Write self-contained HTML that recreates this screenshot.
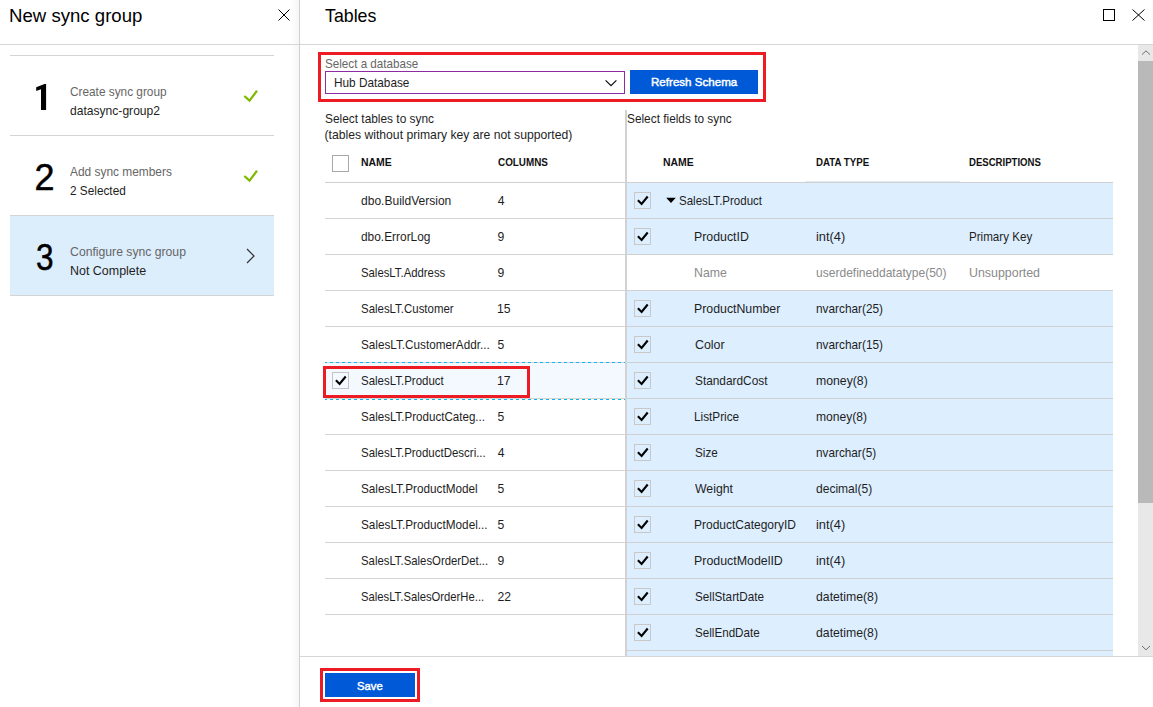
<!DOCTYPE html>
<html><head><meta charset="utf-8"><style>
html,body{margin:0;padding:0;background:#fff;width:1153px;height:707px;overflow:hidden;position:relative}
body>div{position:absolute}
.t{white-space:nowrap;font-family:"Liberation Sans", sans-serif;transform-origin:0 0}
</style></head><body>
<div style="left:290px;top:0px;width:9px;height:707px;background:linear-gradient(to right, rgba(0,0,0,0), rgba(0,0,0,0.035));"></div>
<div style="left:299px;top:0px;width:1px;height:707px;background:#d0d0d0;"></div>
<div style="left:0px;top:44px;width:299px;height:1px;background:#d6d6d6;"></div>
<div class="t" style="left:9.47px;top:4.68px;font-size:18.800px;line-height:21.62px;color:#000;font-weight:normal;transform:scaleX(0.9905);">New sync group</div>
<svg style="position:absolute;left:278px;top:9px" width="12" height="12" viewBox="0 0 12 12"><path d="M0.5 0.5L11.5 11.5M11.5 0.5L0.5 11.5" stroke="#000" stroke-width="1"/></svg>
<div style="left:10px;top:55px;width:264px;height:1px;background:#d4d4d4;"></div>
<div style="left:10px;top:216px;width:264px;height:79px;background:#dcedfc;"></div>
<div style="left:10px;top:135px;width:264px;height:1px;background:#d4d4d4;"></div>
<svg style="position:absolute;left:30px;top:80px" width="24" height="34" viewBox="0 0 24 34"><path d="M6.2 7.3L14.5 4L16.1 4L16.1 30L11 30L11 9.3L6.2 11Z" fill="#000"/></svg>
<div class="t" style="left:70.10px;top:84.76px;font-size:12.200px;line-height:14.03px;color:#666;font-weight:normal;transform:scaleX(0.9697);">Create sync group</div>
<div class="t" style="left:70.19px;top:103.76px;font-size:12.200px;line-height:14.03px;color:#1e1e1e;font-weight:normal;transform:scaleX(0.9914);">datasync-group2</div>
<div style="left:10px;top:215px;width:264px;height:1px;background:#d4d4d4;"></div>
<div class="t" style="left:34.59px;top:156.83px;font-size:36.000px;line-height:41.4px;color:#000;font-weight:normal;-webkit-text-stroke:0.5px #000">2</div>
<div class="t" style="left:69.98px;top:164.76px;font-size:12.200px;line-height:14.03px;color:#666;font-weight:normal;transform:scaleX(0.9763);">Add sync members</div>
<div class="t" style="left:70.11px;top:183.76px;font-size:12.200px;line-height:14.03px;color:#1e1e1e;font-weight:normal;transform:scaleX(0.9680);">2 Selected</div>
<div style="left:10px;top:295px;width:264px;height:1px;background:#d4d4d4;"></div>
<div class="t" style="left:36.00px;top:236.83px;font-size:36.000px;line-height:41.4px;color:#000;font-weight:normal;transform:scaleX(0.8758);-webkit-text-stroke:0.5px #000">3</div>
<div class="t" style="left:70.08px;top:244.76px;font-size:12.200px;line-height:14.03px;color:#666;font-weight:normal;">Configure sync group</div>
<div class="t" style="left:69.68px;top:263.76px;font-size:12.200px;line-height:14.03px;color:#1e1e1e;font-weight:normal;transform:scaleX(1.0219);">Not Complete</div>
<svg style="position:absolute;left:243px;top:89px" width="16" height="14" viewBox="0 0 16 14"><path d="M1.3 7L6.5 11.6L14 1.8" fill="none" stroke="#7fba00" stroke-width="2.3"/></svg>
<svg style="position:absolute;left:243px;top:169px" width="16" height="14" viewBox="0 0 16 14"><path d="M1.3 7L6.5 11.6L14 1.8" fill="none" stroke="#7fba00" stroke-width="2.3"/></svg>
<svg style="position:absolute;left:245px;top:248px" width="12" height="16" viewBox="0 0 12 16"><path d="M2 1L9 8L2 15" fill="none" stroke="#333" stroke-width="1.2"/></svg>
<div style="left:300px;top:44px;width:853px;height:1px;background:#d6d6d6;"></div>
<div class="t" style="left:324.60px;top:6.23px;font-size:18.200px;line-height:20.93px;color:#000;font-weight:normal;transform:scaleX(0.9778);">Tables</div>
<div style="left:1103px;top:9px;width:12px;height:12px;box-sizing:border-box;border:1px solid #000;"></div>
<svg style="position:absolute;left:1132px;top:9px" width="13" height="12" viewBox="0 0 13 12"><path d="M0.5 0.5L12.5 11.5M12.5 0.5L0.5 11.5" stroke="#000" stroke-width="1"/></svg>
<div style="left:318px;top:52px;width:448px;height:50px;box-sizing:border-box;border:3px solid #ed1c24;"></div>
<div class="t" style="left:324.67px;top:56.76px;font-size:12.200px;line-height:14.03px;color:#666666;font-weight:normal;transform:scaleX(0.9564);">Select a database</div>
<div style="left:325px;top:71px;width:300px;height:23px;box-sizing:border-box;border:1px solid #8b2ca3;background:#fff"></div>
<div class="t" style="left:333.63px;top:75.76px;font-size:12.200px;line-height:14.03px;color:#1e1e1e;font-weight:normal;transform:scaleX(0.9679);">Hub Database</div>
<svg style="position:absolute;left:604px;top:79px" width="14" height="8" viewBox="0 0 14 8"><path d="M1.6 1.4L7 6.6L12.4 1.4" fill="none" stroke="#111" stroke-width="1.3"/></svg>
<div style="left:630px;top:70px;width:128px;height:24px;background:#005ad8;"></div>
<div class="t" style="left:650.85px;top:76.13px;font-size:11.800px;line-height:13.57px;color:#fff;font-weight:normal;transform:scaleX(0.9817);-webkit-text-stroke:0.45px #fff">Refresh Schema</div>
<div class="t" style="left:324.76px;top:111.76px;font-size:12.200px;line-height:14.03px;color:#1e1e1e;font-weight:normal;transform:scaleX(0.9750);">Select tables to sync</div>
<div class="t" style="left:324.44px;top:127.76px;font-size:12.200px;line-height:14.03px;color:#1e1e1e;font-weight:normal;">(tables without primary key are not supported)</div>
<div class="t" style="left:626.86px;top:111.76px;font-size:12.200px;line-height:14.03px;color:#1e1e1e;font-weight:normal;transform:scaleX(0.9720);">Select fields to sync</div>
<div style="left:625px;top:110px;width:2px;height:546px;background:#d2d2d2;"></div>
<div style="left:332px;top:155px;width:17px;height:17px;box-sizing:border-box;border:1px solid #a8a8a8;"></div>
<div class="t" style="left:360.55px;top:156.51px;font-size:10.300px;line-height:11.845px;color:#111;font-weight:bold;transform:scaleX(1.0146);">NAME</div>
<div class="t" style="left:497.59px;top:156.51px;font-size:10.300px;line-height:11.845px;color:#111;font-weight:bold;transform:scaleX(0.9589);">COLUMNS</div>
<div style="left:325px;top:182px;width:300px;height:1px;background:#cfcfcf;"></div>
<div style="left:325px;top:218px;width:300px;height:1px;background:#d4d4d4;"></div>
<div class="t" style="left:360.69px;top:193.76px;font-size:12.200px;line-height:14.03px;color:#1e1e1e;font-weight:normal;transform:scaleX(0.9872);">dbo.BuildVersion</div>
<div class="t" style="left:497.72px;top:193.76px;font-size:12.200px;line-height:14.03px;color:#1e1e1e;font-weight:normal;">4</div>
<div style="left:325px;top:254px;width:300px;height:1px;background:#d4d4d4;"></div>
<div class="t" style="left:360.70px;top:229.76px;font-size:12.200px;line-height:14.03px;color:#1e1e1e;font-weight:normal;transform:scaleX(0.9765);">dbo.ErrorLog</div>
<div class="t" style="left:497.43px;top:229.76px;font-size:12.200px;line-height:14.03px;color:#1e1e1e;font-weight:normal;">9</div>
<div style="left:325px;top:290px;width:300px;height:1px;background:#d4d4d4;"></div>
<div class="t" style="left:360.68px;top:265.76px;font-size:12.200px;line-height:14.03px;color:#1e1e1e;font-weight:normal;transform:scaleX(0.9304);">SalesLT.Address</div>
<div class="t" style="left:497.43px;top:265.76px;font-size:12.200px;line-height:14.03px;color:#1e1e1e;font-weight:normal;">9</div>
<div style="left:325px;top:326px;width:300px;height:1px;background:#d4d4d4;"></div>
<div class="t" style="left:360.68px;top:301.76px;font-size:12.200px;line-height:14.03px;color:#1e1e1e;font-weight:normal;transform:scaleX(0.9383);">SalesLT.Customer</div>
<div class="t" style="left:497.07px;top:301.76px;font-size:12.200px;line-height:14.03px;color:#1e1e1e;font-weight:normal;">15</div>
<div style="left:325px;top:362px;width:300px;height:1px;background:#d4d4d4;"></div>
<div class="t" style="left:360.67px;top:337.76px;font-size:12.200px;line-height:14.03px;color:#1e1e1e;font-weight:normal;transform:scaleX(0.9612);">SalesLT.CustomerAddr...</div>
<div class="t" style="left:497.51px;top:337.76px;font-size:12.200px;line-height:14.03px;color:#1e1e1e;font-weight:normal;">5</div>
<div style="left:325px;top:363px;width:300px;height:35px;background:#f3f9fe;"></div>
<div style="left:325px;top:398px;width:300px;height:1px;background:#d4d4d4;"></div>
<div class="t" style="left:360.68px;top:373.76px;font-size:12.200px;line-height:14.03px;color:#1e1e1e;font-weight:normal;transform:scaleX(0.9425);">SalesLT.Product</div>
<div class="t" style="left:497.07px;top:373.76px;font-size:12.200px;line-height:14.03px;color:#1e1e1e;font-weight:normal;">17</div>
<div style="left:325px;top:434px;width:300px;height:1px;background:#d4d4d4;"></div>
<div class="t" style="left:360.67px;top:409.76px;font-size:12.200px;line-height:14.03px;color:#1e1e1e;font-weight:normal;transform:scaleX(0.9499);">SalesLT.ProductCateg...</div>
<div class="t" style="left:497.51px;top:409.76px;font-size:12.200px;line-height:14.03px;color:#1e1e1e;font-weight:normal;">5</div>
<div style="left:325px;top:470px;width:300px;height:1px;background:#d4d4d4;"></div>
<div class="t" style="left:360.68px;top:445.76px;font-size:12.200px;line-height:14.03px;color:#1e1e1e;font-weight:normal;transform:scaleX(0.9412);">SalesLT.ProductDescri...</div>
<div class="t" style="left:497.72px;top:445.76px;font-size:12.200px;line-height:14.03px;color:#1e1e1e;font-weight:normal;">4</div>
<div style="left:325px;top:506px;width:300px;height:1px;background:#d4d4d4;"></div>
<div class="t" style="left:360.67px;top:481.76px;font-size:12.200px;line-height:14.03px;color:#1e1e1e;font-weight:normal;transform:scaleX(0.9643);">SalesLT.ProductModel</div>
<div class="t" style="left:497.51px;top:481.76px;font-size:12.200px;line-height:14.03px;color:#1e1e1e;font-weight:normal;">5</div>
<div style="left:325px;top:542px;width:300px;height:1px;background:#d4d4d4;"></div>
<div class="t" style="left:360.67px;top:517.76px;font-size:12.200px;line-height:14.03px;color:#1e1e1e;font-weight:normal;transform:scaleX(0.9651);">SalesLT.ProductModel...</div>
<div class="t" style="left:497.51px;top:517.76px;font-size:12.200px;line-height:14.03px;color:#1e1e1e;font-weight:normal;">5</div>
<div style="left:325px;top:578px;width:300px;height:1px;background:#d4d4d4;"></div>
<div class="t" style="left:360.68px;top:553.76px;font-size:12.200px;line-height:14.03px;color:#1e1e1e;font-weight:normal;transform:scaleX(0.9310);">SalesLT.SalesOrderDet...</div>
<div class="t" style="left:497.43px;top:553.76px;font-size:12.200px;line-height:14.03px;color:#1e1e1e;font-weight:normal;">9</div>
<div style="left:325px;top:614px;width:300px;height:1px;background:#d4d4d4;"></div>
<div class="t" style="left:360.69px;top:589.76px;font-size:12.200px;line-height:14.03px;color:#1e1e1e;font-weight:normal;transform:scaleX(0.9245);">SalesLT.SalesOrderHe...</div>
<div class="t" style="left:497.39px;top:589.76px;font-size:12.200px;line-height:14.03px;color:#1e1e1e;font-weight:normal;">22</div>
<div style="left:325px;top:362px;width:300px;height:1px;background:repeating-linear-gradient(to right, #0bb5f0 0 2px, transparent 2px 5px, #0bb5f0 5px 6px);"></div>
<div style="left:325px;top:399px;width:300px;height:1px;background:repeating-linear-gradient(to right, #0bb5f0 0 2px, transparent 2px 5px, #0bb5f0 5px 6px);"></div>
<div style="left:332px;top:372px;width:17px;height:17px;box-sizing:border-box;border:1px solid #c4c4c4;"></div>
<svg style="position:absolute;left:332px;top:372px" width="17" height="17" viewBox="0 0 17 17"><path d="M3.9 8.3L7.6 12L13.7 4.5" fill="none" stroke="#000" stroke-width="2.1"/></svg>
<div style="left:323px;top:366px;width:207px;height:32px;box-sizing:border-box;border:3px solid #ed1c24;"></div>
<div class="t" style="left:662.60px;top:156.51px;font-size:10.300px;line-height:11.845px;color:#111;font-weight:bold;transform:scaleX(1.0146);">NAME</div>
<div class="t" style="left:815.95px;top:156.51px;font-size:10.300px;line-height:11.845px;color:#111;font-weight:bold;transform:scaleX(0.9406);">DATA TYPE</div>
<div class="t" style="left:969.06px;top:156.51px;font-size:10.300px;line-height:11.845px;color:#111;font-weight:bold;transform:scaleX(0.9306);">DESCRIPTIONS</div>
<div style="left:627px;top:182px;width:486px;height:1px;background:#cfcfcf;"></div>
<div style="left:805px;top:181px;width:155px;height:1px;background:#e4ecf4;"></div>
<div style="left:627px;top:183px;width:486px;height:35px;background:#ddeefe;"></div>
<div style="left:627px;top:218px;width:486px;height:1px;background:#d0d0d0;"></div>
<div style="left:634px;top:192px;width:17px;height:17px;box-sizing:border-box;border:1px solid #c8c8c8;"></div>
<svg style="position:absolute;left:634px;top:192px" width="17" height="17" viewBox="0 0 17 17"><path d="M3.9 8.3L7.6 12L13.7 4.5" fill="none" stroke="#000" stroke-width="2.1"/></svg>
<svg style="position:absolute;left:666px;top:197px" width="10" height="7" viewBox="0 0 10 7"><path d="M0.2 0.8H9.8L5 5.9Z" fill="#000"/></svg>
<div class="t" style="left:678.88px;top:193.76px;font-size:12.200px;line-height:14.03px;color:#1e1e1e;font-weight:normal;transform:scaleX(0.9452);">SalesLT.Product</div>
<div style="left:627px;top:219px;width:486px;height:35px;background:#ddeefe;"></div>
<div style="left:627px;top:254px;width:486px;height:1px;background:#d0d0d0;"></div>
<div style="left:634px;top:228px;width:17px;height:17px;box-sizing:border-box;border:1px solid #c8c8c8;"></div>
<svg style="position:absolute;left:634px;top:228px" width="17" height="17" viewBox="0 0 17 17"><path d="M3.9 8.3L7.6 12L13.7 4.5" fill="none" stroke="#000" stroke-width="2.1"/></svg>
<div class="t" style="left:694.19px;top:229.76px;font-size:12.200px;line-height:14.03px;color:#1e1e1e;font-weight:normal;transform:scaleX(1.0114);">ProductID</div>
<div class="t" style="left:815.84px;top:229.76px;font-size:12.200px;line-height:14.03px;color:#1e1e1e;font-weight:normal;transform:scaleX(1.0528);">int(4)</div>
<div class="t" style="left:969.05px;top:229.76px;font-size:12.200px;line-height:14.03px;color:#1e1e1e;font-weight:normal;transform:scaleX(0.9523);">Primary Key</div>
<div style="left:627px;top:290px;width:486px;height:1px;background:#d0d0d0;"></div>
<div class="t" style="left:694.19px;top:265.76px;font-size:12.200px;line-height:14.03px;color:#8a8a8a;font-weight:normal;transform:scaleX(1.0103);">Name</div>
<div class="t" style="left:815.92px;top:265.76px;font-size:12.200px;line-height:14.03px;color:#8a8a8a;font-weight:normal;transform:scaleX(0.9882);">userdefineddatatype(50)</div>
<div class="t" style="left:969.04px;top:265.76px;font-size:12.200px;line-height:14.03px;color:#8a8a8a;font-weight:normal;transform:scaleX(1.0174);">Unsupported</div>
<div style="left:627px;top:291px;width:486px;height:35px;background:#ddeefe;"></div>
<div style="left:627px;top:326px;width:486px;height:1px;background:#d0d0d0;"></div>
<div style="left:634px;top:300px;width:17px;height:17px;box-sizing:border-box;border:1px solid #c8c8c8;"></div>
<svg style="position:absolute;left:634px;top:300px" width="17" height="17" viewBox="0 0 17 17"><path d="M3.9 8.3L7.6 12L13.7 4.5" fill="none" stroke="#000" stroke-width="2.1"/></svg>
<div class="t" style="left:694.19px;top:301.76px;font-size:12.200px;line-height:14.03px;color:#1e1e1e;font-weight:normal;transform:scaleX(1.0111);">ProductNumber</div>
<div class="t" style="left:815.91px;top:301.76px;font-size:12.200px;line-height:14.03px;color:#1e1e1e;font-weight:normal;transform:scaleX(0.9703);">nvarchar(25)</div>
<div style="left:627px;top:327px;width:486px;height:35px;background:#ddeefe;"></div>
<div style="left:627px;top:362px;width:486px;height:1px;background:#d0d0d0;"></div>
<div style="left:634px;top:336px;width:17px;height:17px;box-sizing:border-box;border:1px solid #c8c8c8;"></div>
<svg style="position:absolute;left:634px;top:336px" width="17" height="17" viewBox="0 0 17 17"><path d="M3.9 8.3L7.6 12L13.7 4.5" fill="none" stroke="#000" stroke-width="2.1"/></svg>
<div class="t" style="left:694.57px;top:337.76px;font-size:12.200px;line-height:14.03px;color:#1e1e1e;font-weight:normal;transform:scaleX(1.0184);">Color</div>
<div class="t" style="left:815.91px;top:337.76px;font-size:12.200px;line-height:14.03px;color:#1e1e1e;font-weight:normal;transform:scaleX(0.9703);">nvarchar(15)</div>
<div style="left:627px;top:363px;width:486px;height:35px;background:#ddeefe;"></div>
<div style="left:627px;top:398px;width:486px;height:1px;background:#d0d0d0;"></div>
<div style="left:634px;top:372px;width:17px;height:17px;box-sizing:border-box;border:1px solid #c8c8c8;"></div>
<svg style="position:absolute;left:634px;top:372px" width="17" height="17" viewBox="0 0 17 17"><path d="M3.9 8.3L7.6 12L13.7 4.5" fill="none" stroke="#000" stroke-width="2.1"/></svg>
<div class="t" style="left:694.66px;top:373.76px;font-size:12.200px;line-height:14.03px;color:#1e1e1e;font-weight:normal;transform:scaleX(0.9722);">StandardCost</div>
<div class="t" style="left:815.89px;top:373.76px;font-size:12.200px;line-height:14.03px;color:#1e1e1e;font-weight:normal;transform:scaleX(1.0054);">money(8)</div>
<div style="left:627px;top:399px;width:486px;height:35px;background:#ddeefe;"></div>
<div style="left:627px;top:434px;width:486px;height:1px;background:#d0d0d0;"></div>
<div style="left:634px;top:408px;width:17px;height:17px;box-sizing:border-box;border:1px solid #c8c8c8;"></div>
<svg style="position:absolute;left:634px;top:408px" width="17" height="17" viewBox="0 0 17 17"><path d="M3.9 8.3L7.6 12L13.7 4.5" fill="none" stroke="#000" stroke-width="2.1"/></svg>
<div class="t" style="left:694.23px;top:409.76px;font-size:12.200px;line-height:14.03px;color:#1e1e1e;font-weight:normal;transform:scaleX(0.9656);">ListPrice</div>
<div class="t" style="left:815.90px;top:409.76px;font-size:12.200px;line-height:14.03px;color:#1e1e1e;font-weight:normal;transform:scaleX(0.9934);">money(8)</div>
<div style="left:627px;top:435px;width:486px;height:35px;background:#ddeefe;"></div>
<div style="left:627px;top:470px;width:486px;height:1px;background:#d0d0d0;"></div>
<div style="left:634px;top:444px;width:17px;height:17px;box-sizing:border-box;border:1px solid #c8c8c8;"></div>
<svg style="position:absolute;left:634px;top:444px" width="17" height="17" viewBox="0 0 17 17"><path d="M3.9 8.3L7.6 12L13.7 4.5" fill="none" stroke="#000" stroke-width="2.1"/></svg>
<div class="t" style="left:694.67px;top:445.76px;font-size:12.200px;line-height:14.03px;color:#1e1e1e;font-weight:normal;transform:scaleX(0.9612);">Size</div>
<div class="t" style="left:815.92px;top:445.76px;font-size:12.200px;line-height:14.03px;color:#1e1e1e;font-weight:normal;transform:scaleX(0.9653);">nvarchar(5)</div>
<div style="left:627px;top:471px;width:486px;height:35px;background:#ddeefe;"></div>
<div style="left:627px;top:506px;width:486px;height:1px;background:#d0d0d0;"></div>
<div style="left:634px;top:480px;width:17px;height:17px;box-sizing:border-box;border:1px solid #c8c8c8;"></div>
<svg style="position:absolute;left:634px;top:480px" width="17" height="17" viewBox="0 0 17 17"><path d="M3.9 8.3L7.6 12L13.7 4.5" fill="none" stroke="#000" stroke-width="2.1"/></svg>
<div class="t" style="left:695.15px;top:481.76px;font-size:12.200px;line-height:14.03px;color:#1e1e1e;font-weight:normal;transform:scaleX(1.0068);">Weight</div>
<div class="t" style="left:816.19px;top:481.76px;font-size:12.200px;line-height:14.03px;color:#1e1e1e;font-weight:normal;transform:scaleX(0.9881);">decimal(5)</div>
<div style="left:627px;top:507px;width:486px;height:35px;background:#ddeefe;"></div>
<div style="left:627px;top:542px;width:486px;height:1px;background:#d0d0d0;"></div>
<div style="left:634px;top:516px;width:17px;height:17px;box-sizing:border-box;border:1px solid #c8c8c8;"></div>
<svg style="position:absolute;left:634px;top:516px" width="17" height="17" viewBox="0 0 17 17"><path d="M3.9 8.3L7.6 12L13.7 4.5" fill="none" stroke="#000" stroke-width="2.1"/></svg>
<div class="t" style="left:694.22px;top:517.76px;font-size:12.200px;line-height:14.03px;color:#1e1e1e;font-weight:normal;transform:scaleX(0.9837);">ProductCategoryID</div>
<div class="t" style="left:815.84px;top:517.76px;font-size:12.200px;line-height:14.03px;color:#1e1e1e;font-weight:normal;transform:scaleX(1.0513);">int(4)</div>
<div style="left:627px;top:543px;width:486px;height:35px;background:#ddeefe;"></div>
<div style="left:627px;top:578px;width:486px;height:1px;background:#d0d0d0;"></div>
<div style="left:634px;top:552px;width:17px;height:17px;box-sizing:border-box;border:1px solid #c8c8c8;"></div>
<svg style="position:absolute;left:634px;top:552px" width="17" height="17" viewBox="0 0 17 17"><path d="M3.9 8.3L7.6 12L13.7 4.5" fill="none" stroke="#000" stroke-width="2.1"/></svg>
<div class="t" style="left:694.18px;top:553.76px;font-size:12.200px;line-height:14.03px;color:#1e1e1e;font-weight:normal;transform:scaleX(1.0162);">ProductModelID</div>
<div class="t" style="left:815.84px;top:553.76px;font-size:12.200px;line-height:14.03px;color:#1e1e1e;font-weight:normal;transform:scaleX(1.0513);">int(4)</div>
<div style="left:627px;top:579px;width:486px;height:35px;background:#ddeefe;"></div>
<div style="left:627px;top:614px;width:486px;height:1px;background:#d0d0d0;"></div>
<div style="left:634px;top:588px;width:17px;height:17px;box-sizing:border-box;border:1px solid #c8c8c8;"></div>
<svg style="position:absolute;left:634px;top:588px" width="17" height="17" viewBox="0 0 17 17"><path d="M3.9 8.3L7.6 12L13.7 4.5" fill="none" stroke="#000" stroke-width="2.1"/></svg>
<div class="t" style="left:694.67px;top:589.76px;font-size:12.200px;line-height:14.03px;color:#1e1e1e;font-weight:normal;transform:scaleX(0.9614);">SellStartDate</div>
<div class="t" style="left:816.18px;top:589.76px;font-size:12.200px;line-height:14.03px;color:#1e1e1e;font-weight:normal;transform:scaleX(1.0063);">datetime(8)</div>
<div style="left:627px;top:615px;width:486px;height:35px;background:#ddeefe;"></div>
<div style="left:627px;top:650px;width:486px;height:1px;background:#d0d0d0;"></div>
<div style="left:634px;top:624px;width:17px;height:17px;box-sizing:border-box;border:1px solid #c8c8c8;"></div>
<svg style="position:absolute;left:634px;top:624px" width="17" height="17" viewBox="0 0 17 17"><path d="M3.9 8.3L7.6 12L13.7 4.5" fill="none" stroke="#000" stroke-width="2.1"/></svg>
<div class="t" style="left:694.67px;top:625.76px;font-size:12.200px;line-height:14.03px;color:#1e1e1e;font-weight:normal;transform:scaleX(0.9549);">SellEndDate</div>
<div class="t" style="left:816.18px;top:625.76px;font-size:12.200px;line-height:14.03px;color:#1e1e1e;font-weight:normal;transform:scaleX(1.0063);">datetime(8)</div>
<div style="left:627px;top:651px;width:486px;height:5px;background:#ddeefe;"></div>
<div style="left:1138px;top:45px;width:15px;height:611px;background:#e8e8e8;"></div>
<div style="left:1138px;top:61px;width:15px;height:442px;background:#b9b9b9;"></div>
<svg style="position:absolute;left:1140px;top:49px" width="12" height="8" viewBox="0 0 12 8"><path d="M2 5.6L6 1.8L10 5.6" fill="none" stroke="#6e6e6e" stroke-width="1"/></svg>
<svg style="position:absolute;left:1140px;top:644px" width="12" height="8" viewBox="0 0 12 8"><path d="M2 2L6 5.8L10 2" fill="none" stroke="#6e6e6e" stroke-width="1"/></svg>
<div style="left:300px;top:656px;width:853px;height:1px;background:#d6d6d6;"></div>
<div style="left:320px;top:668px;width:100px;height:34px;box-sizing:border-box;border:3px solid #ed1c24;"></div>
<div style="left:325px;top:673px;width:90px;height:24px;background:#005ad8;"></div>
<div class="t" style="left:357.39px;top:680.13px;font-size:11.800px;line-height:13.57px;color:#fff;font-weight:normal;transform:scaleX(0.9534);-webkit-text-stroke:0.45px #fff">Save</div>
</body></html>
